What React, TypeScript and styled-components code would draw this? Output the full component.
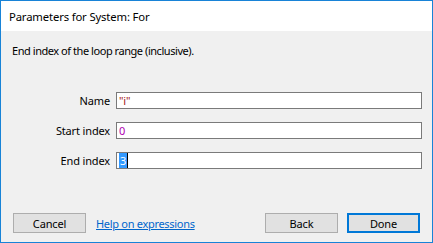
import React from 'react';
import styled, { createGlobalStyle } from 'styled-components';

const GlobalStyle = createGlobalStyle`
  html, body {
    margin: 0;
    padding: 0;
    background: #ffffff;
  }
  * {
    box-sizing: border-box;
  }
`;

const Window = styled.div`
  width: 433px;
  height: 243px;
  border: 1px solid #1883d7;
  display: flex;
  flex-direction: column;
  font-family: 'Noto Sans', 'Open Sans', sans-serif;
  font-size: 11px;
  letter-spacing: -0.15px;
  color: #000;
`;

const TitleBar = styled.div`
  height: 30px;
  flex-shrink: 0;
  background: #ffffff;
  display: flex;
  align-items: center;
  padding-left: 8px;
  font-size: 11.3px;
  color: #000;
`;

const Body = styled.div`
  flex: 1;
  background: #f0f0f0;
  display: flex;
  flex-direction: column;
  padding: 11px 10px 8px 10px;
`;

const Description = styled.div`
  line-height: 17px;
  padding-left: 1px;
  letter-spacing: -0.45px;
`;

const Form = styled.div`
  margin-top: 33px;
  display: grid;
  grid-template-columns: 89px 1fr;
  column-gap: 6px;
  row-gap: 13px;
  padding-left: 10px;
`;

const Label = styled.label`
  text-align: right;
  line-height: 17px;
`;

const Field = styled.div`
  height: 17px;
  border: 1px solid #7a7a7a;
  background: #ffffff;
  display: flex;
  align-items: center;
  padding-left: 2px;
  line-height: 15px;
`;

const Token = styled.span<{ $color: string }>`
  color: ${props => props.$color};
`;

const Selected = styled.span`
  background: #3399ff;
  color: #ffffff;
  line-height: 15px;
  padding: 0 1px;
`;

const Caret = styled.span`
  display: inline-block;
  width: 1px;
  height: 15px;
  background: #000;
`;

const Spacer = styled.div`
  flex: 1;
`;

const Footer = styled.div`
  display: flex;
  align-items: center;
  padding-left: 2px;
  margin-bottom: 1px;
`;

const Button = styled.button<{ $primary?: boolean }>`
  width: 73px;
  height: 20px;
  font-family: inherit;
  font-size: 11px;
  letter-spacing: inherit;
  color: #000;
  background: #e1e1e1;
  border: ${props => (props.$primary ? '2px solid #0078d7' : '1px solid #adadad')};
  padding: 0;
  display: flex;
  align-items: center;
  justify-content: center;
`;

const HelpLink = styled.a`
  margin-left: 10px;
  color: #0066cc;
  text-decoration: underline;
  letter-spacing: -0.3px;
  cursor: pointer;
`;

const RightButtons = styled.div`
  margin-left: auto;
  display: flex;
  gap: 9px;
  padding-right: 2px;
`;

const App: React.FC = () => {
  return (
    <>
      <GlobalStyle />
      <Window>
        <TitleBar>Parameters for System: For</TitleBar>
        <Body>
          <Description>End index of the loop range (inclusive).</Description>
          <Form>
            <Label>Name</Label>
            <Field>
              <Token $color="#a31515">"i"</Token>
            </Field>
            <Label>Start index</Label>
            <Field>
              <Token $color="#b000b0">0</Token>
            </Field>
            <Label>End index</Label>
            <Field>
              <Selected>3</Selected>
              <Caret />
            </Field>
          </Form>
          <Spacer />
          <Footer>
            <Button>Cancel</Button>
            <HelpLink>Help on expressions</HelpLink>
            <RightButtons>
              <Button>Back</Button>
              <Button $primary>Done</Button>
            </RightButtons>
          </Footer>
        </Body>
      </Window>
    </>
  );
};

export default App;
